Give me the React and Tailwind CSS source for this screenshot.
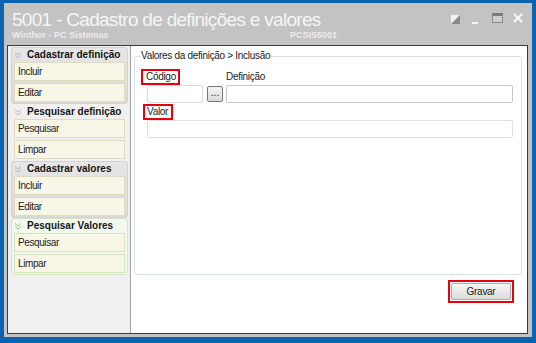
import React from "react";

// small double chevron used in the side menu headers
function Chevrons({ color = "#b5b5b5" }) {
    return (
        <svg width="8" height="8" viewBox="0 0 8 8" fill="none" stroke={color} strokeWidth="1">
            <path d="M1 1.5l3 2.5 3-2.5M1 4.5l3 2.5 3-2.5" />
        </svg>
    );
}

function WindowControls() {
    return (
        <div className="flex items-start pt-[9px] pr-[9px]">
            <svg width="9" height="9" viewBox="0 0 9 9" className="mt-[3px]">
                <rect x="0" y="0" width="9" height="9" fill="#f2f2f2" />
                <path d="M9 0 L9 9 L0 9 Z" fill="#8a8a8a" />
            </svg>
            <div className="ml-[12px] mt-[10px] w-[6px] h-[2px] bg-[#f4f4f4]" />
            <div className="ml-[14px] mt-[1px] w-[11px] h-[10px] border border-[#8c8c8c] border-t-[3px] border-t-[#7a7a7a] bg-[#cdcdcd]" />
            <svg width="10" height="10" viewBox="0 0 10 10" className="ml-[10px] mt-[1px]" stroke="#f7f7f7" strokeWidth="2">
                <path d="M1 1 L9 9 M9 1 L1 9" />
            </svg>
        </div>
    );
}

function Group({ title, items, variant }) {
    let box = "border border-transparent";
    if (variant === "gray") box = "bg-linear-to-b from-[#e6e6e6] to-[#dadada] border border-[#d3d3d3] rounded-[3px]";
    if (variant === "green") box = "bg-[#f3f8ef] border border-[#d2e7c2] rounded-[3px]";
    const itemBorder = variant === "green" ? "border-[#d6e3c0]" : "border-[#e0dbbf]";

    return (
        <div className={`ml-[3px] mr-[2px] pb-[1px] ${box}`}>
            <div className="h-[14px] flex items-center pl-[2px] gap-[5px]">
                <Chevrons color={variant === "green" ? "#9cc884" : "#b8b8b8"} />
                <span className="text-[10px] font-bold leading-[12px] text-[#161616]">{title}</span>
            </div>
            <div className="flex flex-col gap-[2px] px-[2px]">
                {items.map((it) => (
                    <div
                        key={it}
                        className={`h-[19px] bg-[#f8f6e6] border ${itemBorder} pl-[3px] text-[10px] tracking-[-0.4px] leading-[17px] text-[#222]`}
                    >
                        {it}
                    </div>
                ))}
            </div>
        </div>
    );
}

export default function App() {
    return (
        <div className="w-[536px] h-[343px] bg-[#0b62ad] pt-[3px] pl-[4px] pr-[4px] pb-[6px] font-['Liberation_Sans',Arial,sans-serif] overflow-hidden">
            <div className="h-full bg-[#c3c3c3] flex flex-col">
                {/* title bar */}
                <div className="h-[42px] flex justify-between">
                    <div className="pl-[8px] pt-[6px]">
                        <div className="text-[19px] leading-[22px] tracking-[-0.7px] text-[#f6f6f6]">
                            5001 - Cadastro de definições e valores
                        </div>
                        <div className="flex text-[9px] font-bold leading-[11px] text-[#ececec] -mt-[1px]">
                            <span className="w-[278px]">Winthor - PC Sistemas</span>
                            <span>PCSIS5001</span>
                        </div>
                    </div>
                    <WindowControls />
                </div>

                {/* content */}
                <div className="ml-[3px] mr-[4px] mb-[3px] flex-1 border border-[#3a3a3a] flex">
                    <div className="w-[123px] bg-[#f0f0f0] border-r border-[#a4a4a4] pt-[1px]">
                        <Group title="Cadastrar definição" items={["Incluir", "Editar"]} variant="gray" />
                        <Group title="Pesquisar definição" items={["Pesquisar", "Limpar"]} />
                        <Group title="Cadastrar valores" items={["Incluir", "Editar"]} variant="gray" />
                        <Group title="Pesquisar Valores" items={["Pesquisar", "Limpar"]} variant="green" />
                    </div>

                    <div className="flex-1 bg-white flex flex-col text-[10px] tracking-[-0.3px] text-[#222]">
                        <fieldset className="mt-[4px] ml-[3px] mr-[5px] h-[225px] border border-[#d8dfe6] rounded-[3px] p-0">
                            <legend className="ml-[5px] px-[1px] leading-[12px]">Valores da definição &gt; Inclusão</legend>
                            <div className="pl-[12px] pr-[8px] pt-[7px]">
                                <div className="flex items-start">
                                    <div className="w-[56px] flex flex-col">
                                        <div className="-ml-[6px] w-[39px] h-[16px] border-2 border-[#e8000c] pl-[3px] leading-[12px]">
                                            Código
                                        </div>
                                        <div className="h-[18px] border border-[#dcdcdc] rounded-[2px]" />
                                    </div>
                                    <div className="ml-[4px] mt-[17px] w-[16px] h-[16px] border border-[#777] rounded-[2px] bg-linear-to-b from-[#f5f5f5] to-[#d9d9d9] text-center leading-[12px] tracking-normal">
                                        ...
                                    </div>
                                    <div className="ml-[3px] flex-1 flex flex-col">
                                        <div className="h-[16px] pt-[2px] leading-[12px]">Definição</div>
                                        <div className="h-[18px] border border-[#c8c8c8] rounded-[2px]" />
                                    </div>
                                </div>
                                <div className="mt-[1px] -ml-[4px] w-[30px] h-[16px] border-2 border-[#e8000c] pl-[2px] leading-[12px]">
                                    Valor
                                </div>
                                <div className="h-[18px] border border-[#e0e0e0] rounded-[2px]" />
                            </div>
                        </fieldset>

                        <div className="flex justify-end mr-[13px] mt-[5px]">
                            <div className="border-2 border-[#e8000c] p-[1px]">
                                <button className="w-[60px] h-[17px] border border-[#acacac] rounded-[2px] bg-linear-to-b from-[#f6f6f6] to-[#dcdcdc] text-[10px] leading-[15px] text-[#222]">
                                    Gravar
                                </button>
                            </div>
                        </div>
                    </div>
                </div>
            </div>
        </div>
    );
}
